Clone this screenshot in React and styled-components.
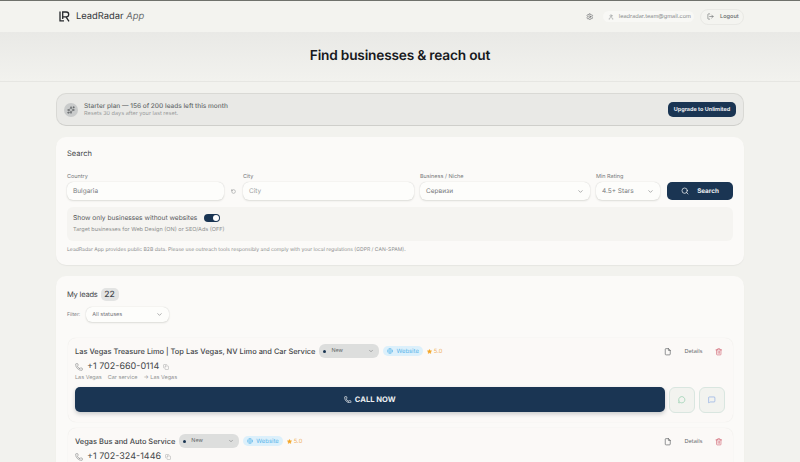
import React from 'react';
import styled, { createGlobalStyle } from 'styled-components';
import { Settings, User, LogOut, Search as SearchIcon, ChevronDown, RotateCcw, Phone, Copy, File, Trash2, MessageCircle, MessageSquare, Star, Globe, Sparkles } from 'lucide-react';

const Global = createGlobalStyle`
  html, body { margin: 0; padding: 0; height: 462px; overflow: hidden; background: #f2f2ee; }
  body { font-family: Inter, "Liberation Sans", sans-serif; color: #33363a; text-rendering: geometricPrecision; }
  button { text-rendering: geometricPrecision; }
  * { box-sizing: border-box; }
`;
const Page = styled.div`height: 462px; overflow: hidden; border-top: 1px solid #6f716c;`;
const Header = styled.header`
  height: 31px; padding: 0 56px 0 59px; display: flex; align-items: center; justify-content: space-between; background: #f3f3ef;
`;
const Brand = styled.div`display: flex; align-items: center; gap: 6px; font-size: 9.4px; color: #35383b; font-weight: 400;`;
const Logo = styled.svg`width: 11px; height: 11px;`;
const AppWord = styled.em`font-weight: 400; color: #66696b;`;
const HeadRight = styled.div`display: flex; align-items: center; gap: 6px;`;
const GearWrap = styled.span`display: flex; color: #66696b; margin-right: 3px;`;
const Email = styled.div`
  display: flex; align-items: center; gap: 5px; height: 11px; padding: 0 3px 0 5px; font-size: 5.6px; color: #85888a; background: #f8f8f5; border-radius: 6px;
`;
const Logout = styled.button`
  display: flex; align-items: center; gap: 6px; height: 16px; width: 44px; padding: 0 0 0 6px; margin-left: 0; font: 500 5.6px Inter, sans-serif; color: #66696b;
  background: #f4f4f0; border: 1px solid #e9e9e5; border-radius: 8px;
`;
const Hero = styled.section`
  height: 50px; display: flex; align-items: center; justify-content: center; background: linear-gradient(#e9e9e6, #f2f2ee); border-bottom: 1px solid #e6e6e2;
`;
const Title = styled.h1`margin: 0; font-size: 13.7px; line-height: 1; font-weight: 600; color: #17191c; letter-spacing: -0.2px;`;
const Main = styled.main`padding: 11px 56px 0; display: flex; flex-direction: column; gap: 12px;`;
const Plan = styled.section`
  height: 33px; padding: 0 7px; display: flex; align-items: center; gap: 6px; background: #e9e9e6; border: 1px solid #d9d9d5; border-bottom-color: #cfcfcb; border-radius: 10px;
`;
const PlanIcon = styled.span`width: 14px; height: 14px; border-radius: 50%; background: #c9cbcb; color: #55585a; display: flex; align-items: center; justify-content: center;`;
const PlanText = styled.div`flex: 1; display: flex; flex-direction: column; gap: 1px;`;
const PlanTitle = styled.div`font-size: 6.5px; line-height: 8px; font-weight: 500; color: #66696b;`;
const PlanSub = styled.div`font-size: 5.55px; line-height: 6px; color: #9a9c9c;`;
const Upgrade = styled.button`
  height: 15px; width: 68px; padding: 0; border: 0; border-radius: 5px; background: #1a3553; color: #e8ecef; font: 700 5.5px Inter, sans-serif;
`;
const Card = styled.section`
  background: #fbfaf8; border-radius: 10px; box-shadow: 0 1px 1px #e6e6e2;
`;
const SearchCard = styled(Card)`height: 128px; padding: 10px 11px 0; margin-top: -1px;`;
const CardTitle = styled.h2`margin: 0; font-size: 7.5px; line-height: 13px; font-weight: 400; color: #44474a;`;
const Fields = styled.div`display: flex; align-items: flex-end; margin-top: 13px;`;
const Field = styled.label`display: flex; flex-direction: column; gap: 1px; width: ${p => p.$w}px; margin-right: ${p => p.$mr || 0}px;`;
const Label = styled.span`font-size: 5.5px; line-height: 8px; color: #77797b;`;
const Control = styled.div`
  height: 18px; padding: 0 6px; display: flex; align-items: center; justify-content: space-between; font-size: 6.5px; color: ${p => p.$muted ? '#a0a2a2' : '#77797b'};
  background: #fdfdfb; border-radius: 6px; box-shadow: 0 0 1px #c9c9c5, 0 1px 2px #dfdfdb;
`;
const ResetSlot = styled.span`width: 19px; height: 18px; display: flex; align-items: center; justify-content: center; color: #77797b;`;
const SearchBtn = styled.button`
  width: 66px; height: 18px; margin-left: 7px; padding: 0; border: 0; border-radius: 5px; background: #1a3553; color: #eef1f3; font: 700 6.3px Inter, sans-serif;
  display: flex; align-items: center; justify-content: center; gap: 8px;
`;
const ToggleBox = styled.div`
  height: 34px; margin-top: 7px; padding: 6px 6px 0; background: #f5f4f1; border-radius: 6px;
`;
const ToggleRow = styled.div`display: flex; align-items: center; gap: 7px; font-size: 6.63px; line-height: 10px; color: #55585a; font-weight: 400;`;
const Toggle = styled.span`
  width: 16px; height: 8px; border-radius: 4px; background: #1a3553; display: flex; justify-content: flex-end; align-items: center; padding-right: 1px;
`;
const Knob = styled.span`width: 6.5px; height: 6.5px; border-radius: 50%; background: #fff;`;
const ToggleHint = styled.div`font-size: 5.55px; line-height: 8px; margin-top: 3px; color: #8c8e8e;`;
const Notice = styled.p`margin: 5px 0 0; font-size: 5.09px; line-height: 8px; color: #8c8e8e;`;
const LeadsCard = styled(Card)`height: 300px; padding: 12px 11px 0; margin-top: -1px;`;
const LeadsHead = styled.div`display: flex; align-items: center; gap: 3px;`;
const LeadsTitle = styled.span`font-size: 7.5px; color: #44474a; letter-spacing: -0.2px;`;
const Count = styled.span`
  width: 18px; height: 13px; border-radius: 5px; background: #e3e4e3; font-size: 8.5px; font-weight: 500; display: flex; align-items: center; justify-content: center; color: #44474a;
`;
const FilterRow = styled.div`display: flex; align-items: center; gap: 6px; margin-top: 6px; font-size: 5px; color: #77797b;`;
const FilterSelect = styled.div`
  width: 83px; height: 15px; padding: 0 6px; display: flex; align-items: center; justify-content: space-between; font-size: 5.5px; color: #77797b;
  background: #fdfdfb; border-radius: 6px; box-shadow: 0 0 1px #c9c9c5, 0 1px 2px #dfdfdb;
`;
const Leads = styled.div`display: flex; flex-direction: column; gap: 6px; margin-top: 16px; padding-left: 1px;`;
const Lead = styled.article`
  height: 84px; padding: 6px 8px 0 7px; border-radius: 8px; background: #fbf9f7; box-shadow: 0 0 1px #e2e2de;
`;
const LeadTop = styled.div`display: flex; align-items: center; height: 14px;`;
const LeadName = styled.span`font-size: 7.44px; font-weight: 500; color: #44474a; white-space: nowrap; margin-right: 4px;`;
const Status = styled.span`
  width: 60px; height: 14px; padding: 0 5px 0 4px; display: flex; align-items: center; gap: 5px; border-radius: 6px; background: #dddedd; font-size: 5.4px; line-height: 14px; color: #66696b; margin-right: 4px;
`;
const Dot = styled.i`width: 3px; height: 3px; border-radius: 50%; background: #1a3553;`;
const StatusLabel = styled.span`flex: 1;`;
const WebBadge = styled.span`
  height: 10px; padding: 0 4px; display: flex; align-items: center; gap: 3px; border-radius: 5px; background: #dcf0fb; color: #5cb6ea; font-size: 5.9px; margin-right: 4px;
`;
const Rating = styled.span`display: flex; align-items: center; gap: 2px; font-size: 5.8px; color: #f0b264;`;
const LeadActions = styled.div`margin: 2px 0 0 auto; display: flex; align-items: center; color: #55585a; padding-right: 3px;`;
const DetailsText = styled.span`font-size: 5.6px; color: #66696b; margin: 0 12px 0 13px;`;
const PhoneRow = styled.div`display: flex; align-items: center; gap: 4px; margin-top: 2px; height: 13px; font-size: 9px; color: #44474a;`;
const PhoneIconWrap = styled.span`display: flex; color: #66696b;`;
const CopyWrap = styled.span`display: flex; color: #a8aaaa;`;
const Meta = styled.div`display: flex; gap: 6px; margin-top: 1px; font-size: 5.5px; line-height: 8px; color: #919393;`;
const CallRow = styled.div`display: flex; gap: 4px; margin-top: 5px;`;
const CallBtn = styled.button`
  flex: 1; height: 25px; padding: 0; border: 0; border-radius: 5px; background: #1a3553; color: #eceff1; font: 700 7.6px Inter, sans-serif;
  display: flex; align-items: center; justify-content: center; gap: 3px; box-shadow: 0 2px 4px #c9cacb;
`;
const SideBtn = styled.span`
  width: 26px; height: 26px; border-radius: 6px; display: flex; align-items: center; justify-content: center; background: #f2f3ef; border: 1px solid #d9e6e0; color: ${p => p.$c};
`;

const LeadCard = ({ name, phone, full }) => (
  <Lead>
    <LeadTop>
      <LeadName>{name}</LeadName>
      <Status><Dot /><StatusLabel>New</StatusLabel><ChevronDown size={6} /></Status>
      <WebBadge><Globe size={6} />Website</WebBadge>
      <Rating><Star size={5} fill="#f5a623" color="#f5a623" />5.0</Rating>
      <LeadActions>
        <File size={7.5} />
        <DetailsText>Details</DetailsText>
        <Trash2 size={7.5} color="#d0606f" />
      </LeadActions>
    </LeadTop>
    <PhoneRow>
      <PhoneIconWrap><Phone size={8} strokeWidth={1.5} /></PhoneIconWrap>
      {phone}
      <CopyWrap><Copy size={6} /></CopyWrap>
    </PhoneRow>
    {full && (
      <>
        <Meta><span>Las Vegas</span><span>Car service</span><span>→ Las Vegas</span></Meta>
        <CallRow>
          <CallBtn><Phone size={7.5} strokeWidth={2.4} />CALL NOW</CallBtn>
          <SideBtn $c="#6fc095"><MessageCircle size={7.5} strokeWidth={1.6} /></SideBtn>
          <SideBtn $c="#6b94e0"><MessageSquare size={7.5} strokeWidth={1.6} /></SideBtn>
        </CallRow>
      </>
    )}
  </Lead>
);

export default function App() {
  return (
    <Page>
      <Global />
      <Header>
        <Brand>
          <Logo viewBox="0 0 11 11" fill="none" stroke="#26292c" strokeWidth="1.3">
            <path d="M1 0.5V9.8H5" />
            <path d="M3.7 8V1H7.3a2.3 2.3 0 0 1 0 4.8H4.2M7 5.8L10 10.3" />
          </Logo>
          <span>LeadRadar <AppWord>App</AppWord></span>
        </Brand>
        <HeadRight>
          <GearWrap><Settings size={7.5} /></GearWrap>
          <Email><User size={6} />leadradar.team@gmail.com</Email>
          <Logout><LogOut size={7} />Logout</Logout>
        </HeadRight>
      </Header>
      <Hero><Title>Find businesses &amp; reach out</Title></Hero>
      <Main>
        <Plan>
          <PlanIcon><Sparkles size={8} /></PlanIcon>
          <PlanText>
            <PlanTitle>Starter plan — 156 of 200 leads left this month</PlanTitle>
            <PlanSub>Resets 30 days after your last reset.</PlanSub>
          </PlanText>
          <Upgrade>Upgrade to Unlimited</Upgrade>
        </Plan>
        <SearchCard>
          <CardTitle>Search</CardTitle>
          <Fields>
            <Field $w={157}><Label>Country</Label><Control>Bulgaria</Control></Field>
            <ResetSlot><RotateCcw size={5} /></ResetSlot>
            <Field $w={171} $mr={6}><Label>City</Label><Control $muted>City</Control></Field>
            <Field $w={170} $mr={6}><Label>Business / Niche</Label><Control>Сервизи<ChevronDown size={7} /></Control></Field>
            <Field $w={64}><Label>Min Rating</Label><Control>4.5+ Stars<ChevronDown size={7} /></Control></Field>
            <SearchBtn><SearchIcon size={8} strokeWidth={2.2} />Search</SearchBtn>
          </Fields>
          <ToggleBox>
            <ToggleRow>Show only businesses without websites<Toggle><Knob /></Toggle></ToggleRow>
            <ToggleHint>Target businesses for Web Design (ON) or SEO/Ads (OFF)</ToggleHint>
          </ToggleBox>
          <Notice>LeadRadar App provides public B2B data. Please use outreach tools responsibly and comply with your local regulations (GDPR / CAN-SPAM).</Notice>
        </SearchCard>
        <LeadsCard>
          <LeadsHead><LeadsTitle>My leads</LeadsTitle><Count>22</Count></LeadsHead>
          <FilterRow>Filter:<FilterSelect>All statuses<ChevronDown size={7} /></FilterSelect></FilterRow>
          <Leads>
            <LeadCard full name="Las Vegas Treasure Limo | Top Las Vegas, NV Limo and Car Service" phone="+1 702-660-0114" />
            <LeadCard name="Vegas Bus and Auto Service" phone="+1 702-324-1446" />
          </Leads>
        </LeadsCard>
      </Main>
    </Page>
  );
}
